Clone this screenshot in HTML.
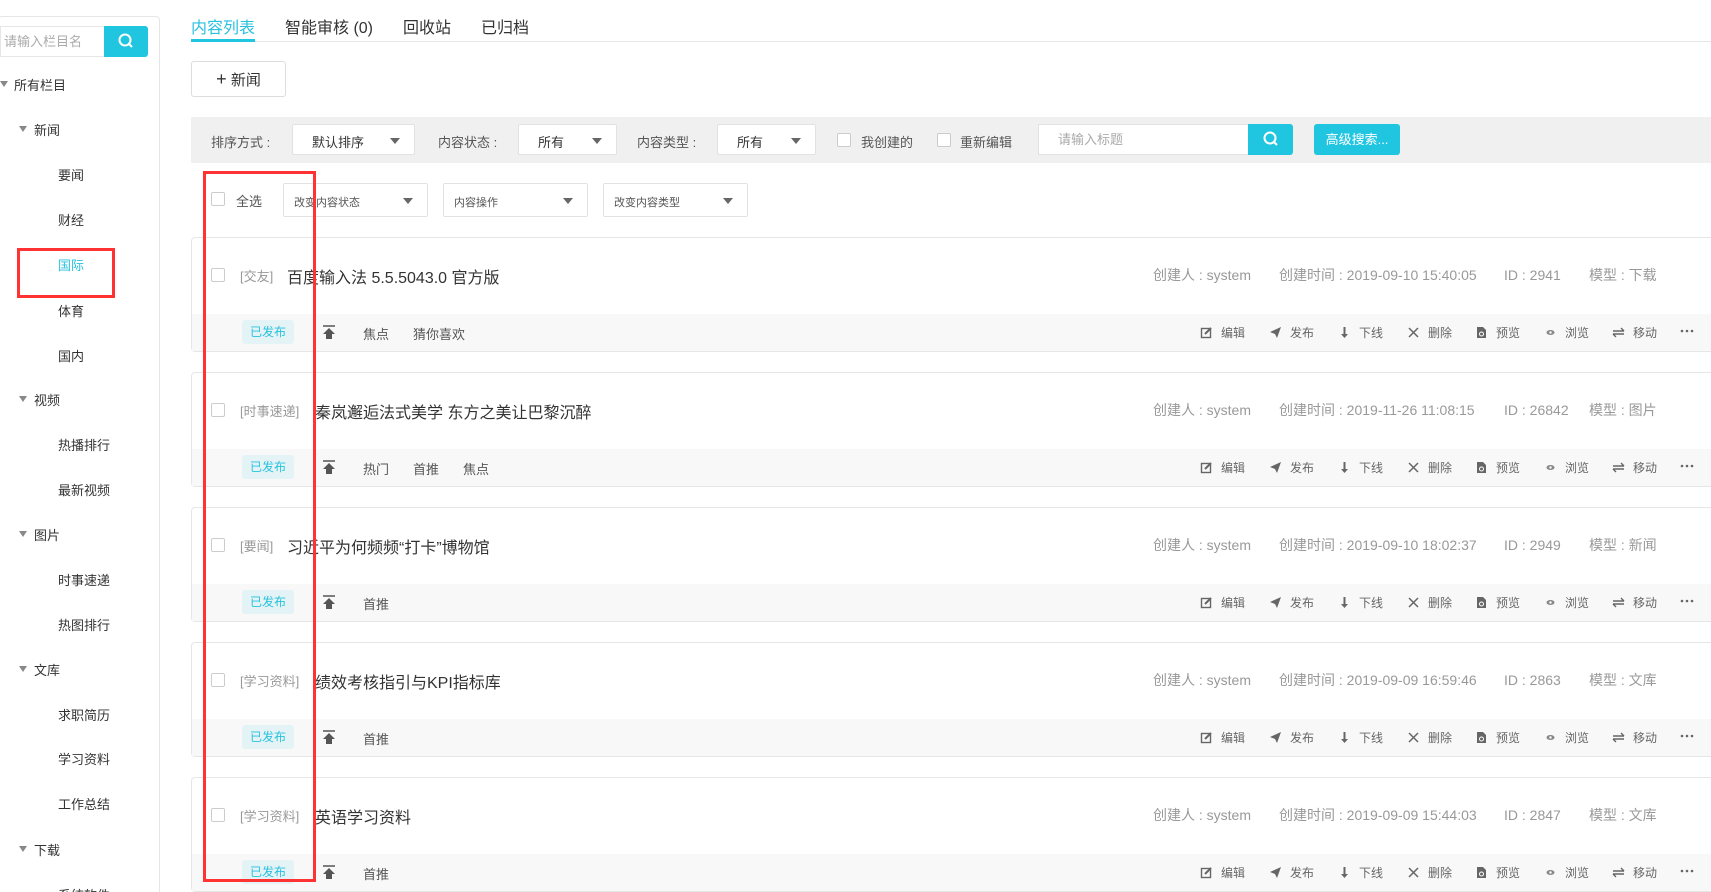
<!DOCTYPE html>
<html><head><meta charset="utf-8"><style>
*{margin:0;padding:0;box-sizing:border-box}
html{width:1711px;height:892px;overflow:hidden}
body{width:1711px;height:892px;overflow:hidden;background:#fff;font-family:"Liberation Sans","Noto Sans CJK SC",sans-serif;color:#333;position:relative;font-size:13px}
svg{display:block}
.a{position:absolute;white-space:nowrap}
.side{position:absolute;left:-2px;top:16px;width:162px;height:880px;border:1px solid #e6e6e6;border-bottom:none;border-radius:4px 4px 0 0}
.tri{position:absolute;width:0;height:0;border-left:4px solid transparent;border-right:4px solid transparent;border-top:6px solid #888}
.sel{position:absolute;background:#fff;border:1px solid #e2e2e2;border-radius:2px;color:#333}
.sel i{position:absolute;right:14px;top:50%;margin-top:-2px;width:0;height:0;border-left:5px solid transparent;border-right:5px solid transparent;border-top:6px solid #666}
.cb{position:absolute;width:14px;height:14px;border:1px solid #ccc;border-radius:2px;background:#fff}
.card{position:absolute;left:191px;width:1540px;height:115px;border:1px solid #e6e6e6;border-radius:4px;background:#fff}
.gray{color:#999}
.m{line-height:20px;font-size:14px}
.act{color:#666;font-size:12px}
</style></head><body>
<div class="side"></div>
<div class="a" style="left:0;top:26px;width:104px;height:31px;border:1px solid #e6e6e6;border-right:none;color:#aaa;font-size:13px;line-height:29px;padding-left:3px">请输入栏目名</div>
<div class="a" style="left:104px;top:26px;width:44px;height:31px;background:#20c5e0;border-radius:0 3px 3px 0">
<svg width="44" height="31"><circle cx="21" cy="14" r="5.5" fill="none" stroke="#fff" stroke-width="2"/><line x1="25" y1="18" x2="28" y2="21" stroke="#fff" stroke-width="2"/></svg></div>

<div class="tri" style="left:0;top:81px"></div><div class="a" style="left:14px;top:75px;font-size:13px">所有栏目</div>
<div class="tri" style="left:19px;top:126px"></div><div class="a" style="left:34px;top:120px">新闻</div>
<div class="a" style="left:58px;top:165px">要闻</div>
<div class="a" style="left:58px;top:210px">财经</div>
<div class="a" style="left:58px;top:255px;color:#29c1de">国际</div>
<div class="a" style="left:17px;top:248px;width:98px;height:50px;border:3px solid #f33"></div>
<div class="a" style="left:58px;top:301px">体育</div>
<div class="a" style="left:58px;top:346px">国内</div>
<div class="tri" style="left:19px;top:396px"></div><div class="a" style="left:34px;top:390px">视频</div>
<div class="a" style="left:58px;top:435px">热播排行</div>
<div class="a" style="left:58px;top:480px">最新视频</div>
<div class="tri" style="left:19px;top:531px"></div><div class="a" style="left:34px;top:525px">图片</div>
<div class="a" style="left:58px;top:570px">时事速递</div>
<div class="a" style="left:58px;top:615px">热图排行</div>
<div class="tri" style="left:19px;top:666px"></div><div class="a" style="left:34px;top:660px">文库</div>
<div class="a" style="left:58px;top:705px">求职简历</div>
<div class="a" style="left:58px;top:749px">学习资料</div>
<div class="a" style="left:58px;top:794px">工作总结</div>
<div class="tri" style="left:19px;top:846px"></div><div class="a" style="left:34px;top:840px">下载</div>
<div class="a" style="left:58px;top:885px">系统软件</div>

<div class="a" style="left:191px;top:41px;width:1520px;height:1px;background:#e6e6e6"></div>
<div class="a" style="left:191px;top:39px;width:64px;height:3px;background:#20c5e0"></div>
<div class="a" style="left:191px;top:14px;font-size:16px;color:#29c1de">内容列表</div>
<div class="a" style="left:285px;top:14px;font-size:16px">智能审核 (0)</div>
<div class="a" style="left:403px;top:14px;font-size:16px">回收站</div>
<div class="a" style="left:481px;top:14px;font-size:16px">已归档</div>

<div class="a" style="left:191px;top:61px;width:95px;height:36px;border:1px solid #ddd;border-radius:3px;font-size:15px;line-height:34px;text-align:center;color:#333"><span style="font-size:18px;font-weight:lighter">+</span> 新闻</div>

<div class="a" style="left:191px;top:117px;width:1520px;height:46px;background:#f0f0f0"></div>
<div class="a" style="left:211px;top:132px;color:#555">排序方式 :</div>
<div class="sel" style="left:292px;top:124px;width:123px;height:31px"><span class="a" style="left:19px;top:7px">默认排序</span><i></i></div>
<div class="a" style="left:438px;top:132px;color:#555">内容状态 :</div>
<div class="sel" style="left:518px;top:124px;width:99px;height:31px"><span class="a" style="left:19px;top:7px">所有</span><i></i></div>
<div class="a" style="left:637px;top:132px;color:#555">内容类型 :</div>
<div class="sel" style="left:717px;top:124px;width:99px;height:31px"><span class="a" style="left:19px;top:7px">所有</span><i></i></div>
<div class="cb" style="left:837px;top:133px"></div><div class="a" style="left:861px;top:132px;color:#555">我创建的</div>
<div class="cb" style="left:937px;top:133px"></div><div class="a" style="left:960px;top:132px;color:#555">重新编辑</div>
<div class="a" style="left:1038px;top:124px;width:211px;height:31px;background:#fff;border:1px solid #e2e2e2;color:#aaa;padding-left:19px;line-height:29px">请输入标题</div>
<div class="a" style="left:1248px;top:124px;width:45px;height:31px;background:#20c5e0;border-radius:0 3px 3px 0"><svg width="45" height="31"><circle cx="22" cy="14" r="5.5" fill="none" stroke="#fff" stroke-width="2"/><line x1="26" y1="18" x2="29" y2="21" stroke="#fff" stroke-width="2"/></svg></div>
<div class="a" style="left:1314px;top:124px;width:86px;height:31px;background:#20c5e0;border-radius:3px;color:#fff;line-height:31px;text-align:center">高级搜索...</div>

<div class="cb" style="left:211px;top:192px"></div><div class="a" style="left:236px;top:191px;color:#555">全选</div>
<div class="sel" style="left:283px;top:183px;width:145px;height:34px;font-size:11px;color:#555"><span class="a" style="left:10px;top:10px">改变内容状态</span><i></i></div>
<div class="sel" style="left:443px;top:183px;width:145px;height:34px;font-size:11px;color:#555"><span class="a" style="left:10px;top:10px">内容操作</span><i></i></div>
<div class="sel" style="left:603px;top:183px;width:145px;height:34px;font-size:11px;color:#555"><span class="a" style="left:10px;top:10px">改变内容类型</span><i></i></div>

<div class="card" style="top:237px"></div>
<div class="card" style="top:372px"></div>
<div class="card" style="top:507px"></div>
<div class="card" style="top:642px"></div>
<div class="card" style="top:777px"></div>

<div id="rows"></div>
<script>
var d=[["[交友]","百度输入法 5.5.5043.0 官方版","2019-09-10 15:40:05","2941","下载",["焦点","猜你喜欢"],287],
["[时事速递]","秦岚邂逅法式美学 东方之美让巴黎沉醉","2019-11-26 11:08:15","26842","图片",["热门","首推","焦点"],315],
["[要闻]","习近平为何频频“打卡”博物馆","2019-09-10 18:02:37","2949","新闻",["首推"],287],
["[学习资料]","绩效考核指引与KPI指标库","2019-09-09 16:59:46","2863","文库",["首推"],315],
["[学习资料]","英语学习资料","2019-09-09 15:44:03","2847","文库",["首推"],315]];
var ic={
"编辑":'<svg width="13" height="13"><rect x="1.5" y="2.5" width="9" height="9" fill="none" stroke="#666" stroke-width="1.4"/><path d="M5 8 L11 2" stroke="#666" stroke-width="2"/></svg>',
"发布":'<svg width="13" height="13"><path d="M1 6 L12 1 L8 12 L6 8 Z" fill="#666"/></svg>',
"下线":'<svg width="13" height="13"><path d="M6.5 1 V9" stroke="#666" stroke-width="2"/><path d="M3 8 L6.5 12 L10 8Z" fill="#666"/></svg>',
"删除":'<svg width="13" height="13"><path d="M2 2 L11 11 M11 2 L2 11" stroke="#666" stroke-width="1.5"/></svg>',
"预览":'<svg width="13" height="13"><path d="M2 1 H8 L11 4 V12 H2Z" fill="#666"/><circle cx="6.5" cy="8" r="2" fill="none" stroke="#fff" stroke-width="1"/></svg>',
"浏览":'<svg width="13" height="13"><ellipse cx="6.5" cy="6.5" rx="4" ry="2.5" fill="#888"/><circle cx="6.5" cy="6.5" r="1.2" fill="#fff"/></svg>',
"移动":'<svg width="13" height="13"><path d="M1 5 H12 M1 8 H12 M9 2 L12 5 M4 11 L1 8" stroke="#666" stroke-width="1.4" fill="none"/></svg>'};
var acts=[["编辑",1200],["发布",1269],["下线",1338],["删除",1407],["预览",1475],["浏览",1544],["移动",1612]];
var h="";
d.forEach(function(r,i){var t=237+i*135;
h+='<div class="cb" style="left:211px;top:'+(t+31)+'px"></div>';
h+='<div class="a gray" style="left:240px;top:'+(t+29)+'px;font-size:13px">'+r[0]+'</div>';
h+='<div class="a" style="left:'+r[6]+'px;top:'+(t+27)+'px;font-size:16px;color:#333">'+r[1]+'</div>';
h+='<div class="a gray m" style="left:1153px;top:'+(t+28)+'px">创建人 : system</div>';
h+='<div class="a gray m" style="left:1279px;top:'+(t+28)+'px">创建时间 : '+r[2]+'</div>';
h+='<div class="a gray m" style="left:1504px;top:'+(t+28)+'px">ID : '+r[3]+'</div>';
h+='<div class="a gray m" style="left:1589px;top:'+(t+28)+'px">模型 : '+r[4]+'</div>';
h+='<div class="a" style="left:192px;top:'+(t+77)+'px;width:1520px;height:37px;background:#f8f8f8"></div>';
h+='<div class="a" style="left:242px;top:'+(t+83)+'px;width:52px;height:24px;background:#e4f3f5;color:#29c1de;border-radius:3px;text-align:center;line-height:24px;font-size:12px">已发布</div>';
h+='<div class="a" style="left:322px;top:'+(t+88)+'px"><svg width="14" height="15"><path d="M1 1 H13" stroke="#555" stroke-width="1.5"/><path d="M7 3 L13 9 H10 V14 H4 V9 H1Z" fill="#555"/></svg></div>';
var x=363;r[5].forEach(function(g){h+='<div class="a" style="left:'+x+'px;top:'+(t+87)+'px;color:#555">'+g+'</div>';x+=g.length*13+24;});
acts.forEach(function(a){h+='<div class="a" style="left:'+a[1]+'px;top:'+(t+89)+'px">'+ic[a[0]]+'</div><div class="a act" style="left:'+(a[1]+21)+'px;top:'+(t+87)+'px">'+a[0]+'</div>';});
h+='<div class="a" style="left:1680px;top:'+(t+92)+'px"><svg width="14" height="4"><circle cx="2" cy="2" r="1.3" fill="#666"/><circle cx="7" cy="2" r="1.3" fill="#666"/><circle cx="12" cy="2" r="1.3" fill="#666"/></svg></div>';
});
document.getElementById("rows").innerHTML=h;
</script>
<div class="a" style="left:203px;top:171px;width:113px;height:711px;border:3px solid #f33"></div>
</body></html>
